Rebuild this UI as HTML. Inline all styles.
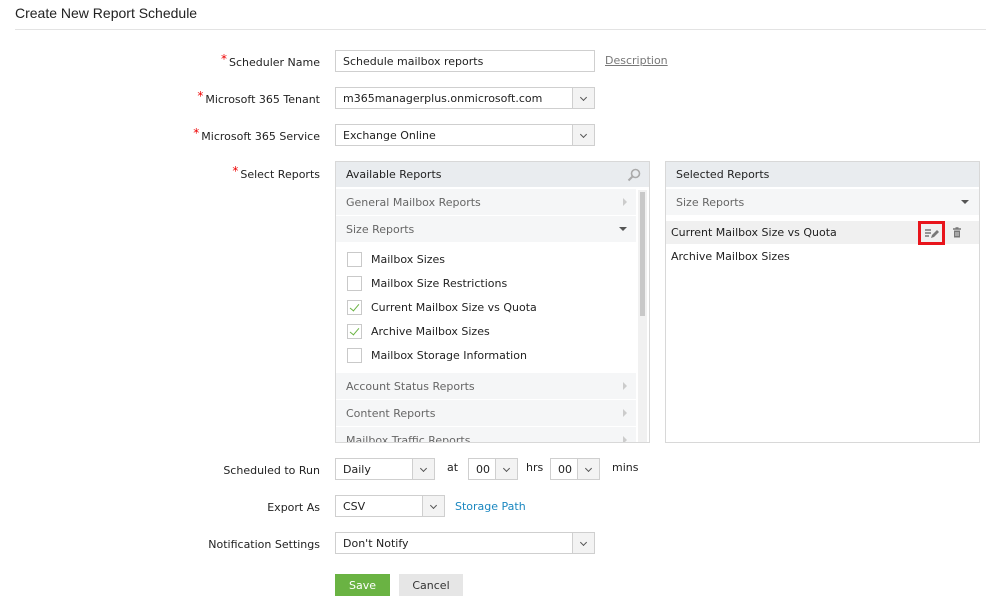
<!DOCTYPE html>
<html><head><meta charset="utf-8"><style>
*{box-sizing:border-box;margin:0;padding:0}
body{width:986px;height:610px;background:#fff;font-family:"DejaVu Sans","Liberation Sans",sans-serif;font-size:11px;color:#222;position:relative;overflow:hidden}
.a{position:absolute;white-space:nowrap}
.lbl{position:absolute;right:666px;text-align:right;white-space:nowrap}
.req{color:#e00;font-size:12px;position:relative;top:-3px;margin-right:2px}
.box{position:absolute;border:1px solid #cfcfcf;background:#fff;padding-left:7px;line-height:21px;white-space:nowrap}
.arr{position:absolute;right:0;top:0;bottom:0;width:22px;border-left:1px solid #cfcfcf;background:#f3f3f3}
.arr:after{content:"";position:absolute;left:8px;top:7px;width:4px;height:4px;border-right:1.3px solid #555;border-bottom:1.3px solid #555;transform:rotate(45deg)}
.panel{position:absolute;border:1px solid #d8d8d8;background:#fff;overflow:hidden}
.hd{position:absolute;left:0;right:0;top:0;height:25px;background:#e9ecef;line-height:25px;padding-left:10px;color:#222}
.grp{position:absolute;left:0;height:26px;background:#f5f6f7;line-height:27px;padding-left:10px;color:#666;white-space:nowrap}
.tri{position:absolute;width:0;height:0}
.cb{position:absolute;left:11px;width:15px;height:15px;border:1px solid #c9c9c9;background:#fff}
.cb.on:after{content:"";position:absolute;left:4px;top:1px;width:4px;height:8px;border-right:1.5px solid #6ab343;border-bottom:1.5px solid #6ab343;transform:rotate(40deg)}
.it{position:absolute;left:35px;white-space:nowrap;color:#222;margin-top:1px}
</style></head><body>
<div class="a" style="left:15px;top:5px;font-family:'Liberation Sans',sans-serif;font-size:14px;color:#222">Create New Report Schedule</div>
<div class="a" style="left:15px;top:29px;width:971px;height:1px;background:#e3e3e3"></div>

<div class="lbl" style="top:55px"><span class="req">*</span>Scheduler Name</div>
<div class="box" style="left:335px;top:50px;width:260px;height:22px">Schedule mailbox reports</div>
<div class="a" style="left:605px;top:54px;color:#777;text-decoration:underline">Description</div>

<div class="lbl" style="top:92px"><span class="req">*</span>Microsoft 365 Tenant</div>
<div class="box" style="left:335px;top:87px;width:260px;height:22px">m365managerplus.onmicrosoft.com<div class="arr"></div></div>

<div class="lbl" style="top:129px"><span class="req">*</span>Microsoft 365 Service</div>
<div class="box" style="left:335px;top:124px;width:260px;height:22px">Exchange Online<div class="arr"></div></div>

<div class="lbl" style="top:167px"><span class="req">*</span>Select Reports</div>

<div class="panel" style="left:335px;top:161px;width:315px;height:282px">
 <div class="hd">Available Reports</div>
 <svg class="a" style="left:291px;top:6px" width="14" height="14" viewBox="0 0 14 14"><circle cx="8.5" cy="5.5" r="4" fill="none" stroke="#aaa" stroke-width="1.6"/><path d="M5.5 8.5L1.5 12.5" stroke="#aaa" stroke-width="2"/></svg>
 <div class="grp" style="top:27px;width:300px">General Mailbox Reports</div>
 <div class="tri" style="left:287px;top:36px;border-left:4px solid #ccc;border-top:4px solid transparent;border-bottom:4px solid transparent"></div>
 <div class="grp" style="top:54px;width:300px">Size Reports</div>
 <div class="tri" style="left:283px;top:65px;border-top:4px solid #555;border-left:4px solid transparent;border-right:4px solid transparent"></div>
 <div class="cb" style="top:90px"></div><div class="it" style="top:90px">Mailbox Sizes</div>
 <div class="cb" style="top:114px"></div><div class="it" style="top:114px">Mailbox Size Restrictions</div>
 <div class="cb on" style="top:138px"></div><div class="it" style="top:138px">Current Mailbox Size vs Quota</div>
 <div class="cb on" style="top:162px"></div><div class="it" style="top:162px">Archive Mailbox Sizes</div>
 <div class="cb" style="top:186px"></div><div class="it" style="top:186px">Mailbox Storage Information</div>
 <div class="grp" style="top:211px;width:300px">Account Status Reports</div>
 <div class="tri" style="left:287px;top:220px;border-left:4px solid #ccc;border-top:4px solid transparent;border-bottom:4px solid transparent"></div>
 <div class="grp" style="top:238px;width:300px">Content Reports</div>
 <div class="tri" style="left:287px;top:247px;border-left:4px solid #ccc;border-top:4px solid transparent;border-bottom:4px solid transparent"></div>
 <div class="grp" style="top:265px;width:300px">Mailbox Traffic Reports</div>
 <div class="tri" style="left:287px;top:274px;border-left:4px solid #ccc;border-top:4px solid transparent;border-bottom:4px solid transparent"></div>
 <div class="a" style="left:302px;top:28px;width:9px;height:254px;background:#f1f1f1"></div>
 <div class="a" style="left:304px;top:30px;width:5px;height:124px;background:#c8c8c8"></div>
</div>

<div class="panel" style="left:665px;top:161px;width:315px;height:282px">
 <div class="hd">Selected Reports</div>
 <div class="grp" style="top:27px;width:315px">Size Reports</div>
 <div class="tri" style="left:295px;top:38px;border-top:4px solid #555;border-left:4px solid transparent;border-right:4px solid transparent"></div>
 <div class="a" style="left:0;top:59px;width:315px;height:23px;background:#f0f0f0;line-height:23px;padding-left:5px">Current Mailbox Size vs Quota</div>
 <div class="a" style="left:252px;top:59px;width:27px;height:24px;border:3px solid #e8141b;background:#f0f0f0"></div>
 <svg class="a" style="left:258px;top:65px" width="16" height="12" viewBox="0 0 16 12"><path d="M1 3h6M1 6h6M1 9h4" stroke="#777" stroke-width="1.5"/><path d="M7 11l1-3 5-5 2 2-5 5z" fill="#777"/></svg>
 <svg class="a" style="left:286px;top:65px" width="10" height="11" viewBox="0 0 10 11"><path d="M1 2h8M3.5 1h3" stroke="#777" stroke-width="1.4"/><path d="M2 3.5h6v7H2z" fill="#777"/><path d="M4 5v4M6 5v4" stroke="#f0f0f0" stroke-width="0.8"/></svg>
 <div class="a" style="left:5px;top:88px">Archive Mailbox Sizes</div>
</div>

<div class="lbl" style="top:464px">Scheduled to Run</div>
<div class="box" style="left:335px;top:458px;width:100px;height:22px">Daily<div class="arr"></div></div>
<div class="a" style="left:447px;top:461px">at</div>
<div class="box" style="left:468px;top:458px;width:50px;height:22px">00<div class="arr"></div></div>
<div class="a" style="left:526px;top:461px">hrs</div>
<div class="box" style="left:550px;top:458px;width:50px;height:22px">00<div class="arr"></div></div>
<div class="a" style="left:612px;top:461px">mins</div>

<div class="lbl" style="top:501px">Export As</div>
<div class="box" style="left:335px;top:495px;width:110px;height:22px">CSV<div class="arr"></div></div>
<div class="a" style="left:455px;top:500px;color:#1a87c0">Storage Path</div>

<div class="lbl" style="top:538px">Notification Settings</div>
<div class="box" style="left:335px;top:532px;width:260px;height:22px">Don't Notify<div class="arr"></div></div>

<div class="a" style="left:335px;top:574px;width:55px;height:22px;background:#6ab343;color:#fff;text-align:center;line-height:23px">Save</div>
<div class="a" style="left:399px;top:574px;width:64px;height:22px;background:#e6e6e6;color:#333;text-align:center;line-height:23px">Cancel</div>
</body></html>
